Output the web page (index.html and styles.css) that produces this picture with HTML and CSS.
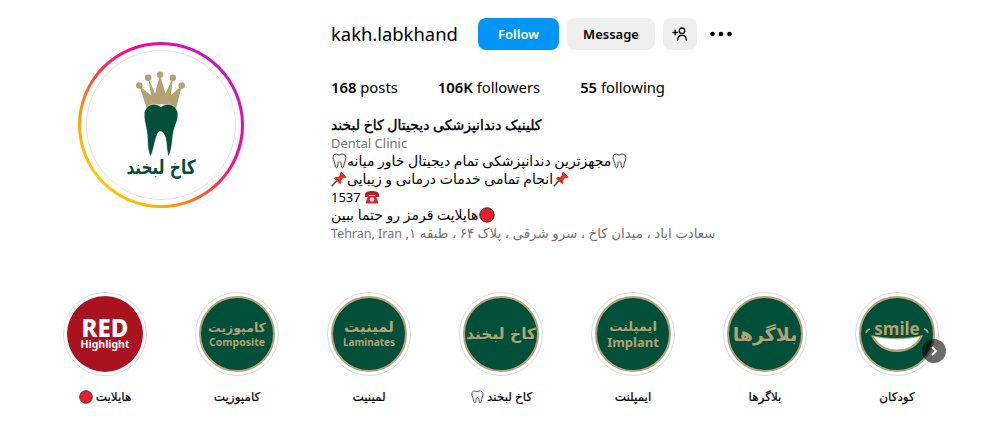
FILE: index.html

```html
<!DOCTYPE html>
<html lang="en">
<head>
    <meta charset="UTF-8">
    <meta name="viewport" content="width=device-width, initial-scale=1.0">
    <title>kakh.labkhand</title>
    <link rel="stylesheet" href="styles.css">
</head>
<body>
    <svg class="defs" width="0" height="0">
        <symbol id="tooth" viewBox="0 0 16 16">
            <path d="M3.800 1.200C5.600.8 6.800 1.500 8 2.100c1.200-.6 2.400-1.300 4.200-.9 2.300.5 3 2.800 2.500 5-.4 1.800-1.200 2.800-1.500 4.500-.3 1.700-.5 4-1.800 4.100-1.400.1-1-3.600-1.500-5.200-.3-1-2.500-1-2.800 0-.5 1.600-.1 5.300-1.500 5.200-1.300-.1-1.500-2.400-1.800-4.100C3.500 9 2.700 8 2.300 6.200c-.5-2.200.2-4.500 1.500-5z" fill="#f4f4f2" stroke="#3a3a3a" stroke-width="1"/>
        </symbol>
        <symbol id="pin" viewBox="0 0 16 16">
            <path d="M.8 15.300l5.500-6" stroke="#555" stroke-width="1.600"/>
            <path d="M9.800.4l5.800 5.800-1.800 1.100-1.300-.5-2.300 2.400c.5 1.700.1 3-.9 4L2.800 7.200c1-1 2.300-1.400 4-.9l2.400-2.300-.5-1.300z" fill="#dd3a22"/>
            <path d="M10.300 1.500l4.200 4.200M5 6.800l4.200 4.200" stroke="#a82414" stroke-width="1"/>
        </symbol>
        <symbol id="phone" viewBox="0 0 16 16">
            <path d="M1 5.500C1 3 4 2 8 2s7 1 7 3.500V8h-3.600V6.200H4.600V8H1z" fill="#b3202c"/>
            <path d="M4 7h8l2.300 6.500c.1.500-.2.900-.7.900H2.400c-.5 0-.8-.4-.7-.9z" fill="#c92b38"/>
            <circle cx="8" cy="10.500" r="2.300" fill="#f0c9cc"/>
        </symbol>
        <symbol id="dot" viewBox="0 0 16 16">
            <circle cx="8" cy="8" r="7.200" fill="#ec1c2c" stroke="#2a2a2a" stroke-width="1"/>
        </symbol>
    </svg>

    <!-- Profile header -->
    <header class="profile">
        <div class="avatar-ring">
            <div class="avatar">
                <svg class="logo" viewBox="86 50 150 150">
                    <path d="M139 85L146.500 108Q161 100 176.500 108L182 85L171 95L173 77L165.500 93L160 74L155 93L148 77L151 95z" fill="#b5a172"/>
                    <circle cx="139" cy="85" r="3.300" fill="#b5a172"/>
                    <circle cx="148" cy="77" r="3.300" fill="#b5a172"/>
                    <circle cx="160" cy="74" r="3.300" fill="#b5a172"/>
                    <circle cx="173" cy="77" r="3.300" fill="#b5a172"/>
                    <circle cx="182" cy="85" r="3.300" fill="#b5a172"/>
                    <path d="M144 112C147.500 102 156 103 161 106.500C166 103 174.500 102 178 112C179 120 175 125 173.500 133C172 141 172.500 150 168.500 157C166.500 151 167 141 165 136.500C163 131 159.500 130 157.500 134C154.500 140 154 150 150.500 157C146.500 150 148 140 146.500 131C145.500 124 143.500 120 144 112z" fill="#03503a" stroke="#fff" stroke-width="0.600"/>
                    <text class="logo-text" x="161" y="175" text-anchor="middle" textLength="70" lengthAdjust="spacingAndGlyphs">کاخ لبخند</text>
                </svg>
            </div>
        </div>

        <section class="info">
            <div class="top-row">
                <h1 class="username">kakh.labkhand</h1>
                <button class="btn btn-follow">Follow</button>
                <button class="btn btn-message">Message</button>
                <button class="btn btn-add" aria-label="Suggest">
                    <svg width="16" height="16" viewBox="0 0 16 16" fill="none" stroke="#000" stroke-width="1.300" stroke-linecap="round">
                        <path d="M1 6.500h4.500M3.250 4.250v4.500"/>
                        <circle cx="10" cy="4.800" r="2.800"/>
                        <path d="M5.700 14c0-3 1.800-4.600 4.300-4.600s4.300 1.600 4.300 4.600"/>
                    </svg>
                </button>
                <svg class="more" width="24" height="6" viewBox="0 0 24 6" fill="#000">
                    <circle cx="2.500" cy="3" r="2.300"/>
                    <circle cx="11" cy="3" r="2.300"/>
                    <circle cx="19.500" cy="3" r="2.300"/>
                </svg>
            </div>

            <ul class="stats">
                <li><b>168</b> posts</li>
                <li><b>106K</b> followers</li>
                <li><b>55</b> following</li>
            </ul>

            <div class="bio">
                <p class="bio-name">کلینیک دندانپزشکی دیجیتال کاخ لبخند</p>
                <p class="muted latin">Dental Clinic</p>
                <p><svg class="emoji"><use href="#tooth"/></svg>مجهزترین دندانپزشکی تمام دیجیتال خاور میانه<svg class="emoji"><use href="#tooth"/></svg></p>
                <p><svg class="emoji"><use href="#pin"/></svg>انجام تمامی خدمات درمانی و زیبایی<svg class="emoji"><use href="#pin"/></svg></p>
                <p><span class="latin">1537</span> <svg class="emoji"><use href="#phone"/></svg></p>
                <p>هایلایت قرمز رو حتما ببین<svg class="emoji"><use href="#dot"/></svg></p>
                <p class="muted location"><span class="rtl">سعادت اباد ، میدان کاخ ، سرو شرقی ، پلاک ۶۴ ، طبقه ۱, <span class="latin">Tehran, Iran</span></span></p>
            </div>
        </section>
    </header>

    <!-- Highlights -->
    <section class="highlights">
        <div class="story">
            <div class="story-ring">
                <div class="story-img story-red">
                    <span class="red-big">RED</span>
                    <span class="red-small">Highlight</span>
                </div>
            </div>
            <p class="story-label"><svg class="emoji"><use href="#dot"/></svg> هایلایت</p>
        </div>
        <div class="story">
            <div class="story-ring">
                <div class="story-img">
                    <span class="fa">کامپوزیت</span>
                    <span class="en">Composite</span>
                </div>
            </div>
            <p class="story-label">کامپوزیت</p>
        </div>
        <div class="story">
            <div class="story-ring">
                <div class="story-img">
                    <span class="fa fa-laminate">لمینیت</span>
                    <span class="en en-small">Laminates</span>
                </div>
            </div>
            <p class="story-label">لمینیت</p>
        </div>
        <div class="story">
            <div class="story-ring">
                <div class="story-img">
                    <span class="fa fa-logo">کاخ لبخند</span>
                </div>
            </div>
            <p class="story-label"><svg class="emoji"><use href="#tooth"/></svg> کاخ لبخند</p>
        </div>
        <div class="story">
            <div class="story-ring">
                <div class="story-img">
                    <span class="fa fa-implant">ایمپلنت</span>
                    <span class="en en-big">Implant</span>
                </div>
            </div>
            <p class="story-label">ایمپلنت</p>
        </div>
        <div class="story">
            <div class="story-ring">
                <div class="story-img">
                    <span class="fa fa-big">بلاگرها</span>
                </div>
            </div>
            <p class="story-label">بلاگرها</p>
        </div>
        <div class="story">
            <div class="story-ring">
                <div class="story-img story-smile">
                    <span class="smile-word">smile</span>
                    <svg class="smile-mouth" width="64" height="25" viewBox="0 0 64 25">
                        <path d="M6 7C20 11 44 11 58 7C54 18 43 24 32 24C21 24 10 18 6 7z" fill="#b5a172"/>
                        <path d="M9 8.500C21 12 43 12 55 8.500C51 17 42 21.500 32 21.500C22 21.500 13 17 9 8.500z" fill="#fff"/>
                        <path d="M1 5C1.500 2.500 2.500 1.500 5 1M63 5C62.500 2.500 61.500 1.500 59 1" fill="none" stroke="#b5a172" stroke-width="1.500"/>
                    </svg>
                </div>
            </div>
            <p class="story-label">کودکان</p>
            <span class="next">
                <svg width="8" height="12" viewBox="0 0 8 12" fill="none" stroke="#fff" stroke-width="2">
                    <path d="M2 2l4 4-4 4"/>
                </svg>
            </span>
        </div>
    </section>
</body>
</html>
```

FILE: styles.css

```css
/* Reset */
* {
    margin: 0;
    padding: 0;
    box-sizing: border-box;
}

body {
    font-family: "Noto Sans", "DejaVu Sans", sans-serif;
    background: #fff;
    color: #000;
}

.defs {
    position: absolute;
}

.emoji {
    width: 16px;
    height: 16px;
    vertical-align: -3px;
}

/* Profile header */
.profile {
    display: flex;
    height: 292px;
    padding-left: 78px;
}

.avatar-ring {
    width: 166px;
    height: 166px;
    margin-top: 42px;
    padding: 3px;
    border-radius: 50%;
    background: linear-gradient(45deg, #ffd600 10%, #ffa000 28%, #ff2a50 50%, #ff0090 65%, #c913c9 85%);
}

.avatar {
    width: 160px;
    height: 160px;
    padding: 5px;
    border-radius: 50%;
    background: #fff;
}

.logo {
    display: block;
    width: 150px;
    height: 150px;
    border: 1px solid #e2e2e2;
    border-radius: 50%;
}

.logo-text {
    font-family: "DejaVu Sans", sans-serif;
    font-size: 20px;
    font-weight: bold;
    fill: #03503a;
}

.info {
    margin-left: 87px;
    padding-top: 18px;
}

.top-row {
    display: flex;
    align-items: center;
    height: 32px;
}

.username {
    width: 147px;
    font-size: 18.4px;
    font-weight: 400;
    line-height: 36px;
}

.btn {
    height: 32px;
    border: none;
    border-radius: 8px;
    font-family: inherit;
    font-size: 13px;
    font-weight: 600;
    margin-right: 8px;
}

.btn-follow {
    width: 81px;
    background: #0095f6;
    color: #fff;
}

.btn-message {
    width: 88px;
    background: #efefef;
    color: #000;
}

.btn-add {
    display: flex;
    align-items: center;
    justify-content: center;
    width: 34px;
    background: #efefef;
}

.more {
    margin-left: 5px;
}

.stats {
    display: flex;
    gap: 40px;
    list-style: none;
    margin-top: 19px;
    font-size: 14.8px;
    line-height: 36px;
}

.stats b {
    font-weight: 600;
}

.bio {
    margin-top: 11px;
    font-size: 14px;
    line-height: 18px;
}

.bio-name {
    -webkit-text-stroke: 0.4px #000;
}

.latin {
    font-family: "Noto Sans", sans-serif;
    font-size: 13px;
}

.muted {
    color: #737373;
}

.location {
    font-size: 13.4px;
}

.location .latin {
    font-size: 12.5px;
}

.rtl {
    display: inline-block;
    direction: rtl;
}

/* Highlights */
.highlights {
    display: grid;
    grid-template-columns: repeat(7, 132px);
    padding-left: 39px;
}

.story {
    position: relative;
    display: flex;
    flex-direction: column;
    align-items: center;
}

.story-ring {
    width: 84px;
    height: 84px;
    padding: 3px;
    border: 1px solid #dbdbdb;
    border-radius: 50%;
}

.story-img {
    display: flex;
    flex-direction: column;
    align-items: center;
    justify-content: center;
    width: 76px;
    height: 76px;
    border: 2px solid #b5a172;
    border-radius: 50%;
    background: #03503a;
    color: #b5a172;
    font-weight: bold;
    overflow: hidden;
}

.fa {
    font-family: "DejaVu Sans", sans-serif;
    font-size: 12.5px;
    line-height: 17px;
}

.fa-laminate {
    font-size: 15px;
}

.fa-implant {
    font-size: 13px;
}

.fa-logo {
    font-size: 15.500px;
}

.fa-big {
    font-size: 19px;
}

.en {
    font-size: 10.5px;
    line-height: 13px;
}

.en-small {
    font-size: 10px;
}

.en-big {
    font-size: 13px;
    line-height: 15px;
}

.story-red {
    border: none;
    background: #ab1220;
    color: #fff;
}

.red-big {
    font-size: 24px;
    line-height: 20px;
    font-weight: 800;
}

.red-small {
    font-size: 10.5px;
    line-height: 12px;
}

.story-smile {
    justify-content: flex-start;
    padding-top: 22px;
}

.smile-word {
    font-size: 17px;
    line-height: 18px;
}

.smile-mouth {
    flex: none;
    margin-top: -10px;
}

.story-label {
    margin-top: 12px;
    font-size: 12px;
    line-height: 18px;
    -webkit-text-stroke: 0.2px #000;
}

.story-label .emoji {
    width: 14px;
    height: 14px;
}

.next {
    position: absolute;
    top: 47px;
    left: 91px;
    display: flex;
    align-items: center;
    justify-content: center;
    width: 24px;
    height: 24px;
    border-radius: 50%;
    background: rgba(0, 0, 0, 0.58);
}
```
